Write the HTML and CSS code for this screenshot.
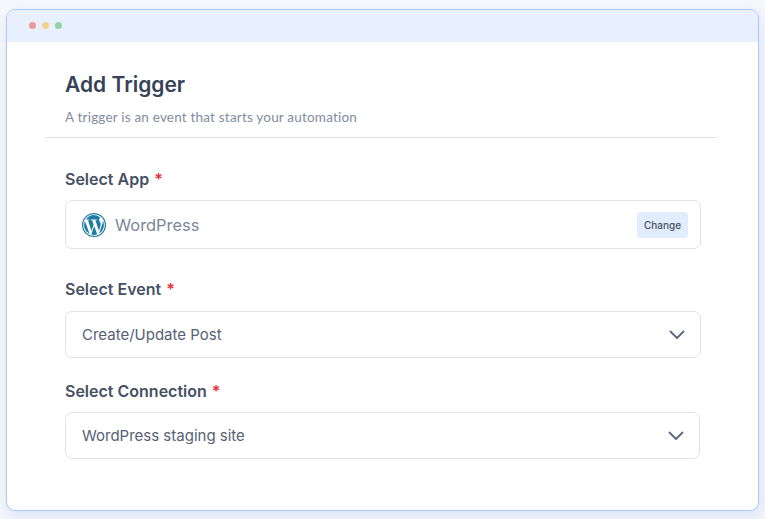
FILE: index.html
```html
<!DOCTYPE html>
<html lang="en">
<head>
<meta charset="utf-8">
<title>Add Trigger</title>
<link rel="stylesheet" href="styles.css">
</head>
<body>
<div class="window">
  <div class="titlebar">
    <span class="dot dot-red"></span>
    <span class="dot dot-yellow"></span>
    <span class="dot dot-green"></span>
  </div>
  <div class="content">
    <header class="head">
      <h1 class="title">Add Trigger</h1>
      <p class="subtitle">A trigger is an event that starts your automation</p>
    </header>
    <div class="form">
      <div class="field field-app">
        <div class="label">Select App <span class="req">*</span></div>
        <div class="box box-app">
          <svg class="wp" viewBox="0 0 24 24" width="24" height="24" aria-hidden="true">
            <circle cx="12" cy="12" r="12" fill="#1f7ba5"/>
            <circle cx="12" cy="12" r="10.800" fill="#fff"/>
            <g transform="translate(12 12) scale(1.140) translate(-12 -12)">
              <path fill="#1f7ba5" d="M3.300 12c0 3.400 2 6.400 4.900 7.800L4 8.400A8.600 8.600 0 0 0 3.300 12zm14.600-.4c0-1.100-.4-1.800-.7-2.400-.4-.7-.8-1.200-.8-1.900 0-.7.600-1.400 1.400-1.400h.1A8.700 8.700 0 0 0 12 3.300c-3 0-5.700 1.600-7.300 3.900h.6c.9 0 2.300-.1 2.300-.1.500 0 .5.700.1.700 0 0-.5.100-1 .1l3.100 9.300 1.900-5.700-1.300-3.600c-.5 0-.9-.1-.9-.1-.5 0-.4-.8 0-.7 0 0 1.400.1 2.300.1.900 0 2.300-.1 2.300-.1.500 0 .5.700.1.700 0 0-.5.100-1 .1l3.100 9.200.9-2.900c.4-1.200.7-2.100.7-2.800zm-5.700 1.200-2.600 7.500c.8.200 1.600.4 2.400.4 1 0 2-.2 2.900-.5l-.1-.1-2.600-7.300zm7.400-4.900c0 .3.100.6.100.9 0 .9-.2 1.900-.7 3.100l-2.600 7.600c2.600-1.500 4.300-4.300 4.300-7.500 0-1.500-.4-2.900-1.100-4.100z"/>
            </g>
          </svg>
          <span class="app-name">WordPress</span>
          <span class="change">Change</span>
        </div>
      </div>
      <div class="field field-event">
        <div class="label">Select Event <span class="req">*</span></div>
        <div class="box box-select">
          <span class="value">Create/Update Post</span>
          <svg class="chev" viewBox="0 0 16 10" width="16" height="10" aria-hidden="true"><path d="M1.500 1.500 8 8l6.500-6.500" fill="none" stroke="#5f6c80" stroke-width="2" stroke-linecap="round" stroke-linejoin="round"/></svg>
        </div>
      </div>
      <div class="field field-conn">
        <div class="label">Select Connection <span class="req">*</span></div>
        <div class="box box-select box-conn">
          <span class="value">WordPress staging site</span>
          <svg class="chev" viewBox="0 0 16 10" width="16" height="10" aria-hidden="true"><path d="M1.500 1.500 8 8l6.500-6.500" fill="none" stroke="#5f6c80" stroke-width="2" stroke-linecap="round" stroke-linejoin="round"/></svg>
        </div>
      </div>
    </div>
  </div>
</div>
</body>
</html>
```

FILE: styles.css
```css
html, body { margin: 0; padding: 0; }
body {
  width: 765px;
  height: 519px;
  overflow: hidden;
  background: #f6f7fb;
  font-family: Inter, "Noto Sans", sans-serif;
  padding: 9px 6px 8px 6px;
  box-sizing: border-box;
}
.window {
  width: 753px;
  height: 502px;
  box-sizing: border-box;
  background: #fff;
  border: 1px solid #a9c7fb;
  border-radius: 9px;
  overflow: hidden;
  box-shadow: 2px 6px 14px rgba(120, 160, 245, 0.22);
}
.titlebar {
  height: 32px;
  background: #e9f0fd;
  display: flex;
  align-items: center;
  gap: 6px;
  padding-left: 22px;
  padding-bottom: 2px;
  box-sizing: border-box;
}
.dot { width: 7px; height: 7px; border-radius: 50%; }
.dot-red { background: #eb9a9c; }
.dot-yellow { background: #f3d28f; }
.dot-green { background: #93d3a6; }
.content { padding: 0 41px 0 37px; }
.head {
  border-bottom: 1px solid #dfe2ea;
  height: 96px;
  box-sizing: border-box;
  padding: 29px 0 0 21px;
}
.title {
  margin: 0;
  font-size: 21px;
  line-height: 28px;
  font-weight: 600;
  color: #364357;
}
.subtitle {
  margin: 9px 0 0;
  font-size: 13.500px;
  line-height: 18px;
  color: #828ca0;
  font-family: Lato, Inter, sans-serif;
  letter-spacing: 0.2px;
}
.form { padding-left: 21px; width: 636px; }
.field-app { padding-top: 31px; }
.field-event { padding-top: 30px; }
.field-conn { padding-top: 23px; }
.label {
  font-size: 16px;
  line-height: 20px;
  font-weight: 600;
  color: #465164;
}
.req { color: #e5323c; margin-left: 1px; }
.box {
  margin-top: 12px;
  box-sizing: border-box;
  background: #fff;
  border: 1px solid #dfe2e9;
  border-radius: 7px;
  display: flex;
  align-items: center;
}
.box-app { margin-top: 11px; height: 49px; padding: 0 12px 0 16px; }
.box-select { height: 47px; padding: 0 15px 0 16px; }
.box-conn { margin-top: 11px; margin-right: 1px; }
.wp { flex: none; }
.app-name {
  margin-left: 9px;
  font-size: 16.400px;
  color: #7c8699;
  flex: 1;
}
.change {
  width: 51px;
  height: 26px;
  border-radius: 4px;
  background: #e1edfc;
  color: #465164;
  font-size: 10px;
  font-weight: 500;
  display: flex;
  align-items: center;
  justify-content: center;
}
.value {
  flex: 1;
  font-size: 15px;
  color: #566174;
}
.chev { flex: none; }
```
